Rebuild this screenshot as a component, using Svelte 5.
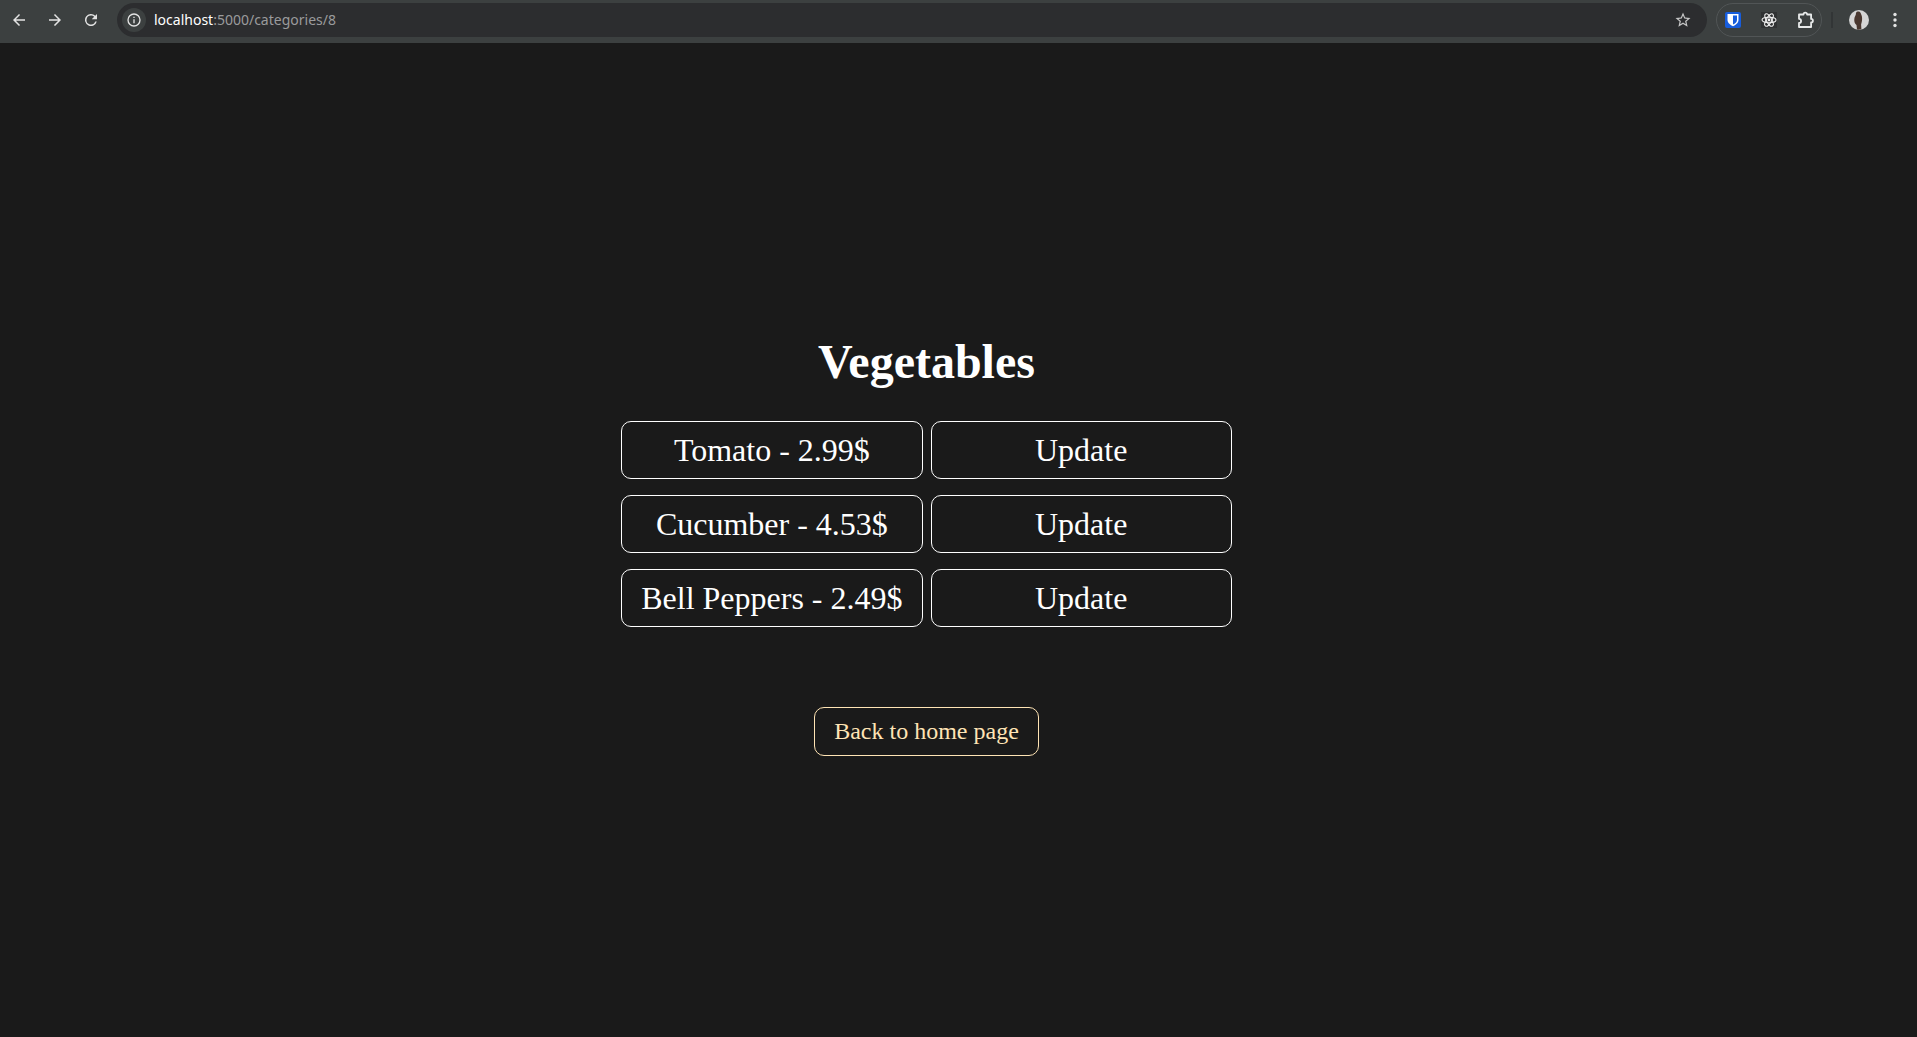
<script>
  const products = [
    { name: 'Tomato', price: '2.99' },
    { name: 'Cucumber', price: '4.53' },
    { name: 'Bell Peppers', price: '2.49' }
  ];
</script>

<div class="window">
  <header class="toolbar">
    <nav class="history" aria-label="History">
      <button aria-label="Back"><svg viewBox="0 0 24 24"><path d="M20 11H7.8l5.6-5.6L12 4l-8 8 8 8 1.4-1.4L7.8 13H20z" /></svg></button>
      <button aria-label="Forward"><svg viewBox="0 0 24 24"><path d="M4 11h12.2l-5.6-5.6L12 4l8 8-8 8-1.4-1.4 5.6-5.6H4z" /></svg></button>
      <button aria-label="Reload"><svg viewBox="0 0 24 24"><path d="M17.65 6.35A8 8 0 1 0 19.73 14h-2.08A6 6 0 1 1 12 6c1.66 0 3.14.69 4.22 1.78L13 11h7V4z" /></svg></button>
    </nav>
    <div class="address">
      <button class="info" aria-label="Site information">
        <svg viewBox="0 0 24 24"><path d="M11 17h2v-6h-2zM11 9h2V7h-2zM12 2a10 10 0 1 0 0 20 10 10 0 0 0 0-20zm0 18a8 8 0 1 1 0-16 8 8 0 0 1 0 16z" /></svg>
      </button>
      <span class="url"><b>localhost</b>:5000/categories/8</span>
      <button class="star" aria-label="Bookmark">
        <svg viewBox="0 0 24 24"><path d="M22 9.24l-7.19-.62L12 2 9.19 8.63 2 9.24l5.46 4.73L5.82 21 12 17.27 18.18 21l-1.63-7.03zM12 15.4l-3.76 2.27 1-4.28-3.32-2.88 4.38-.38L12 6.1l1.71 4.04 4.38.38-3.32 2.88 1 4.28z" /></svg>
      </button>
    </div>
    <div class="extensions">
      <button aria-label="Password manager">
        <svg viewBox="0 0 16 16"><rect width="16" height="16" rx="2" fill="#175ddc" /><path d="M2.500 2h11v6c0 3-3 5-5.500 6.200C5.500 13 2.500 11 2.500 8z" fill="#fff" /><path d="M8 3.500h4V8c0 2-2 3.500-4 4.600z" fill="#175ddc" /></svg>
      </button>
      <button aria-label="Developer tools">
        <svg viewBox="0 0 16 16"><rect width="16" height="16" fill="#303233" /><g fill="none" stroke="#f1f1f1" stroke-width="1.100"><ellipse cx="8" cy="8" rx="7" ry="2.700" /><ellipse cx="8" cy="8" rx="7" ry="2.700" transform="rotate(60 8 8)" /><ellipse cx="8" cy="8" rx="7" ry="2.700" transform="rotate(120 8 8)" /></g><circle cx="8" cy="8" r="1.400" fill="#f1f1f1" /></svg>
      </button>
      <button class="puzzle" aria-label="Extensions">
        <svg viewBox="0 0 18 18"><path d="M2 3.500h4.500a1.800 1.800 0 0 1 3.600 0h4v4.400a1.800 1.800 0 0 1 0 3.600v4.500H2v-4a2 2 0 0 0 0-4.200z" fill="none" stroke="#e8eaea" stroke-width="1.800" stroke-linejoin="round" /></svg>
      </button>
    </div>
    <span class="divider"></span>
    <button class="profile" aria-label="Profile">
      <svg viewBox="0 0 20 20"><circle cx="10" cy="10" r="10" fill="#d5d5d5" /><path d="M7 3c.6-1.600 3.500-2 4.500-.2.600 1.500 1.700 3 1.600 6 0 2.500-.6 4-1 5.700l.3 4.800a10 10 0 0 1-4.400.3L7.500 15C6 14 5 12 5.300 9 5.500 6.500 7 5.500 7 3z" fill="#49372f" /></svg>
    </button>
    <button class="more" aria-label="Menu">
      <svg viewBox="0 0 16 16"><circle cx="8" cy="2.500" r="1.700" /><circle cx="8" cy="8" r="1.700" /><circle cx="8" cy="13.500" r="1.700" /></svg>
    </button>
  </header>

  <main>
    <h1>Vegetables</h1>
    <ul>
      {#each products as product}
        <li>
          <a href="#{product.name}">{product.name} - {product.price}$</a>
          <a href="#update-{product.name}">Update</a>
        </li>
      {/each}
    </ul>
    <a class="home" href="#home">Back to home page</a>
  </main>
</div>

<style>
  :global(body) {
    margin: 0;
    background: #1a1a1a;
  }
  .window {
    display: flex;
    flex-direction: column;
    min-height: 100vh;
  }
  button {
    display: grid;
    place-items: center;
    padding: 0;
    border: 0;
    background: none;
  }
  svg {
    display: block;
    width: 16px;
    height: 16px;
    fill: #e3e3e3;
  }
  .toolbar {
    display: flex;
    align-items: center;
    box-sizing: border-box;
    height: 43px;
    padding: 0 14px 3px 9px;
    background: #3c4040;
  }
  .history {
    display: flex;
    gap: 16px;
    margin-right: 16px;
  }
  .history button {
    width: 20px;
    height: 20px;
  }
  .history svg {
    width: 18px;
    height: 18px;
  }
  .address {
    display: flex;
    flex: 1;
    align-items: center;
    box-sizing: border-box;
    height: 34px;
    padding: 0 15px 0 5px;
    border-radius: 17px;
    background: #2c2d2f;
  }
  .info {
    width: 24px;
    height: 24px;
    border-radius: 50%;
    background: #3c4040;
  }
  .url {
    flex: 1;
    margin-left: 8px;
    color: #9a9b9c;
    font: 14px/20px 'Noto Sans', sans-serif;
  }
  .url b {
    color: #fff;
    font-weight: 400;
  }
  .star svg {
    width: 18px;
    height: 18px;
    fill: #c7c7c7;
  }
  .extensions {
    display: flex;
    align-items: center;
    gap: 20px;
    box-sizing: border-box;
    height: 34px;
    margin-left: 9px;
    padding: 0 6px 0 8px;
    border: 1px solid #515556;
    border-radius: 17px;
  }
  .puzzle svg {
    width: 18px;
    height: 18px;
  }
  .divider {
    width: 2px;
    height: 16px;
    margin: 0 16px 0 9px;
    background: #323536;
  }
  .profile svg {
    width: 20px;
    height: 20px;
  }
  .more {
    margin-left: 18px;
  }
  main {
    display: flex;
    flex: 1;
    flex-direction: column;
    align-items: center;
    justify-content: center;
    padding: 10px 64px 0 0;
    font-family: 'Liberation Serif', serif;
  }
  h1 {
    margin: 0 0 32px;
    color: #fff;
    font-size: 48px;
    line-height: 54px;
  }
  ul {
    display: grid;
    gap: 16px;
    margin: 0 0 80px;
    padding: 0;
    list-style: none;
  }
  li {
    display: grid;
    grid-template-columns: 1fr 1fr;
    gap: 8px;
  }
  a {
    padding: 10px 19px;
    border: 1px solid #fff;
    border-radius: 10px;
    color: #fff;
    font-size: 32px;
    line-height: 36px;
    text-align: center;
    text-decoration: none;
  }
  .home {
    border-color: #ffe4b5;
    color: #ffe4b5;
    font-size: 24px;
    line-height: 27px;
  }
</style>
